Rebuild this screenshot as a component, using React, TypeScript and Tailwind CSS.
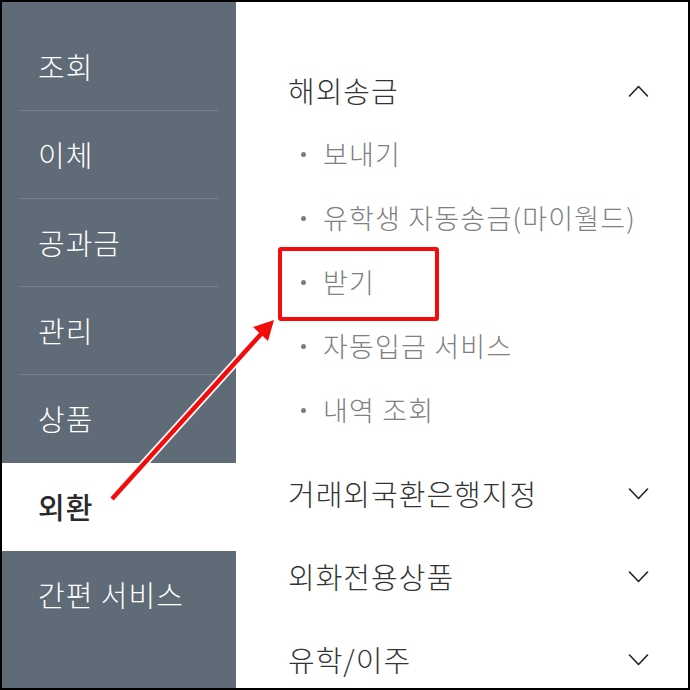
import React from "react";

const FONT = { fontFamily: '"Noto Sans CJK KR", "Noto Sans", sans-serif' };

function Chevron({ up }: { up?: boolean }) {
  return (
    <svg width="21" height="12" viewBox="0 0 21 12" fill="none">
      <path
        d={up ? "M1.5 11 L10.5 1.5 L19.5 11" : "M1.5 1 L10.5 10.5 L19.5 1"}
        stroke="#222"
        strokeWidth="1.6"
        strokeLinecap="round"
        strokeLinejoin="round"
      />
    </svg>
  );
}

const side = [
  { t: "조회", div: true },
  { t: "이체", div: true },
  { t: "공과금", div: true },
  { t: "관리", div: true },
  { t: "상품", div: false },
];

const subs = ["보내기", "유학생 자동송금(마이월드)", "받기", "자동입금 서비스", "내역 조회"];
const heads = ["거래외국환은행지정", "외화전용상품", "유학/이주"];

export default function App() {
  return (
    <div
      className="relative w-[690px] h-[690px] border-2 border-black overflow-hidden flex bg-white"
      style={FONT}
    >
      <div className="w-[234px] shrink-0 bg-[#5f6b77] pt-[21px] flex flex-col">
        {side.map((s) => (
          <div key={s.t} className="px-[18px] shrink-0">
            <div
              className={
                "h-[88px] flex items-center pl-[18px] text-[29px] tracking-[1px] font-light text-white " +
                (s.div ? "border-b border-[#79848f]" : "")
              }
            >
              {s.t}
            </div>
          </div>
        ))}
        <div className="h-[88px] shrink-0 bg-white flex items-center pl-[36px] text-[29px] tracking-[1px] font-medium text-[#2a2a2a]">
          외환
        </div>
        <div className="h-[88px] shrink-0 flex items-center pl-[36px] text-[29px] tracking-[1px] font-light text-white">
          간편 서비스
        </div>
      </div>

      <div className="flex-1 pl-[52px] pr-[39px] pt-[58px] flex flex-col">
        <div className="h-[62px] shrink-0 flex items-center justify-between">
          <span className="text-[29px] tracking-[1px] font-light text-[#333]">해외송금</span>
          <Chevron up />
        </div>
        {subs.map((s) => (
          <div key={s} className="h-[64px] shrink-0 flex items-center pl-[13px]">
            <span className="w-[5px] h-[5px] rounded-full bg-[#7d7d7d] mr-[17px]" />
            <span className="text-[27px] tracking-[1.2px] font-light text-[#808080]">{s}</span>
          </div>
        ))}
        <div className="h-[10px] shrink-0" />
        {heads.map((h) => (
          <div key={h} className="h-[83px] shrink-0 flex items-center justify-between">
            <span className="text-[29px] tracking-[1px] font-light text-[#333]">{h}</span>
            <Chevron />
          </div>
        ))}
      </div>

      <div className="absolute left-[276px] top-[245px] w-[161px] h-[74px] border-4 border-[#f20c0c] rounded-[3px]" />

      <svg
        className="absolute left-[-2px] top-[-2px] pointer-events-none"
        width="690"
        height="690"
        viewBox="0 0 690 690"
      >
        <line x1="112" y1="499" x2="262" y2="333" stroke="#ffffff" strokeWidth="8" />
        <polygon points="274,320 268,341 253,327" fill="#ffffff" stroke="#ffffff" strokeWidth="3" strokeLinejoin="round" />
        <line x1="112" y1="499" x2="262" y2="333" stroke="#f20c0c" strokeWidth="4.5" />
        <polygon points="274,320 268,341 253,327" fill="#f20c0c" />
      </svg>
    </div>
  );
}
